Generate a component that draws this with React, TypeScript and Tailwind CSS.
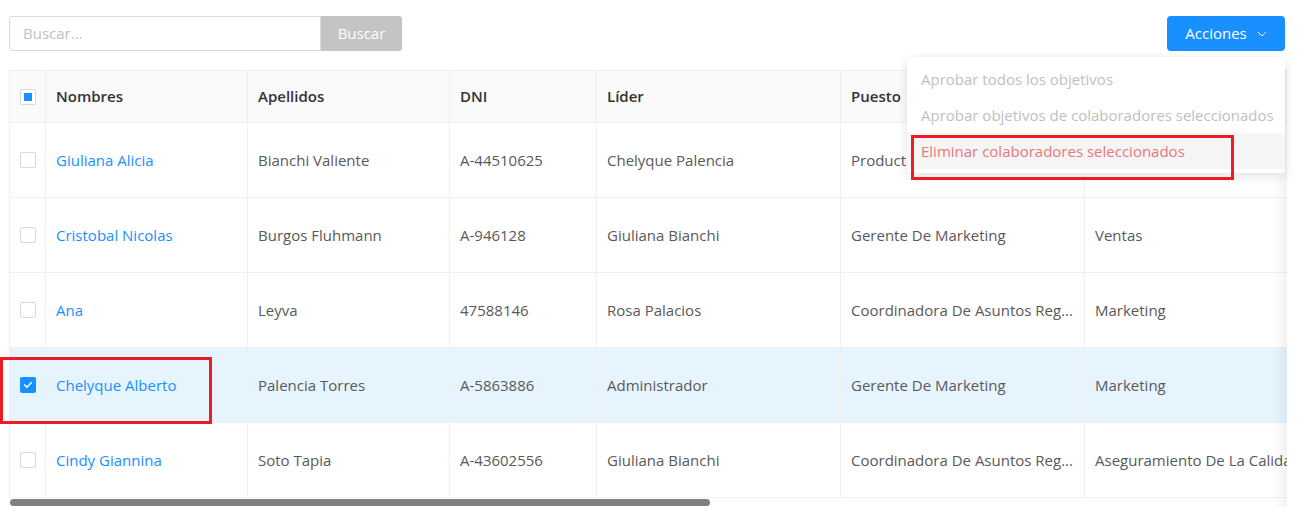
import React from "react";

type Row = {
  nombres: string;
  apellidos: string;
  dni: string;
  lider: string;
  puesto: string;
  area: string;
  selected?: boolean;
};

const ROWS: Row[] = [
  { nombres: "Giuliana Alicia", apellidos: "Bianchi Valiente", dni: "A-44510625", lider: "Chelyque Palencia", puesto: "Product Owner", area: "Tecnología" },
  { nombres: "Cristobal Nicolas", apellidos: "Burgos Fluhmann", dni: "A-946128", lider: "Giuliana Bianchi", puesto: "Gerente De Marketing", area: "Ventas" },
  { nombres: "Ana", apellidos: "Leyva", dni: "47588146", lider: "Rosa Palacios", puesto: "Coordinadora De Asuntos Reg...", area: "Marketing" },
  { nombres: "Chelyque Alberto", apellidos: "Palencia Torres", dni: "A-5863886", lider: "Administrador", puesto: "Gerente De Marketing", area: "Marketing", selected: true },
  { nombres: "Cindy Giannina", apellidos: "Soto Tapia", dni: "A-43602556", lider: "Giuliana Bianchi", puesto: "Coordinadora De Asuntos Reg...", area: "Aseguramiento De La Calidad" },
];

const Checkbox: React.FC<{ checked?: boolean; indeterminate?: boolean }> = ({ checked, indeterminate }) => {
  if (checked) {
    return (
      <span className="flex h-4 w-4 items-center justify-center rounded-[2px] bg-[#1890ff]">
        <svg viewBox="0 0 12 12" className="h-[10px] w-[10px]" fill="none">
          <path d="M2.2 6.2 4.8 8.6 9.8 3.4" stroke="white" strokeWidth="1.8" strokeLinecap="square" />
        </svg>
      </span>
    );
  }
  return (
    <span className="flex h-4 w-4 items-center justify-center rounded-[2px] border border-[#d9d9d9] bg-white">
      {indeterminate && <span className="h-2 w-2 bg-[#1890ff]" />}
    </span>
  );
};

const th = "h-[52px] border-r border-b border-[#f0f0f0] px-[10px] text-left font-semibold text-[#333]";
const td = "h-[75px] border-r border-b border-[#f0f0f0] px-[10px] whitespace-nowrap overflow-hidden";

export default function App() {
  return (
    <div className="relative h-[507px] w-[1297px] overflow-hidden bg-white pt-4 pl-[9px] text-[15px] text-[#595959] [font-family:'Open_Sans',sans-serif]">
      {/* toolbar */}
      <div className="flex w-[1276px] items-center justify-between">
        <div className="flex h-[35px]">
          <div className="flex w-[312px] items-center rounded-l-[3px] border border-[#d9d9d9] pl-[13px] text-[#bfbfbf]">
            Buscar...
          </div>
          <button className="w-[81px] rounded-r-[3px] bg-[#c4c4c4] text-white">Buscar</button>
        </div>
        <button className="flex h-[35px] w-[118px] items-center justify-center gap-[10px] rounded-[4px] bg-[#1890ff] text-white">
          Acciones
          <svg viewBox="0 0 10 6" className="h-[6px] w-[10px]" fill="none">
            <path d="M1 1l4 4 4-4" stroke="white" strokeWidth="1" />
          </svg>
        </button>
      </div>

      {/* table */}
      <div className="relative mt-[19px] w-[1278px] overflow-hidden">
        <table className="w-[1400px] table-fixed border-separate border-spacing-0 border-l border-t border-[#f0f0f0]">
          <colgroup>
            <col className="w-[36px]" />
            <col className="w-[202px]" />
            <col className="w-[202px]" />
            <col className="w-[147px]" />
            <col className="w-[244px]" />
            <col className="w-[244px]" />
            <col className="w-[325px]" />
          </colgroup>
          <thead className="bg-[#fafafa]">
            <tr>
              <th className={th}>
                <Checkbox indeterminate />
              </th>
              <th className={th}>Nombres</th>
              <th className={th}>Apellidos</th>
              <th className={th}>DNI</th>
              <th className={th}>Líder</th>
              <th className={th}>Puesto</th>
              <th className={th}>Área</th>
            </tr>
          </thead>
          <tbody>
            {ROWS.map((r) => (
              <tr key={r.nombres} className={r.selected ? "bg-[#e6f4fe]" : "bg-white"}>
                <td className={td}>
                  <Checkbox checked={r.selected} />
                </td>
                <td className={td}>
                  <span className="text-[#1890ff]">{r.nombres}</span>
                </td>
                <td className={td}>{r.apellidos}</td>
                <td className={td}>{r.dni}</td>
                <td className={td}>{r.lider}</td>
                <td className={td}>{r.puesto}</td>
                <td className={td}>{r.area}</td>
              </tr>
            ))}
          </tbody>
        </table>
        {/* right scroll shadow */}
        <div className="pointer-events-none absolute top-0 right-0 h-full w-[14px] bg-gradient-to-r from-transparent to-black/[0.05]" />
        {/* horizontal scrollbar */}
        <div className="h-[9px] bg-white pt-px">
          <div className="ml-px h-[7px] w-[700px] rounded-full bg-[#808080]" />
        </div>
      </div>

      {/* dropdown menu */}
      <div className="absolute top-[57px] left-[907px] w-[378px] rounded-[4px] bg-white py-1 shadow-[0_3px_12px_rgba(0,0,0,0.12)]">
        <div className="flex h-9 items-center whitespace-nowrap px-[14px] text-[#bfbfbf]">Aprobar todos los objetivos</div>
        <div className="flex h-9 items-center whitespace-nowrap px-[14px] text-[#bfbfbf]">Aprobar objetivos de colaboradores seleccionados</div>
        <div className="flex h-9 items-center whitespace-nowrap bg-[#f5f5f5] px-[14px] text-[#e8777b]">Eliminar colaboradores seleccionados</div>
      </div>

      {/* annotation boxes */}
      <div className="pointer-events-none absolute top-[135px] left-[911px] h-[45px] w-[323px] border-[3.5px] border-[#ec1c24]" />
      <div className="pointer-events-none absolute top-[357px] left-0 h-[67px] w-[212px] border-[3.5px] border-[#ec1c24]" />
    </div>
  );
}
